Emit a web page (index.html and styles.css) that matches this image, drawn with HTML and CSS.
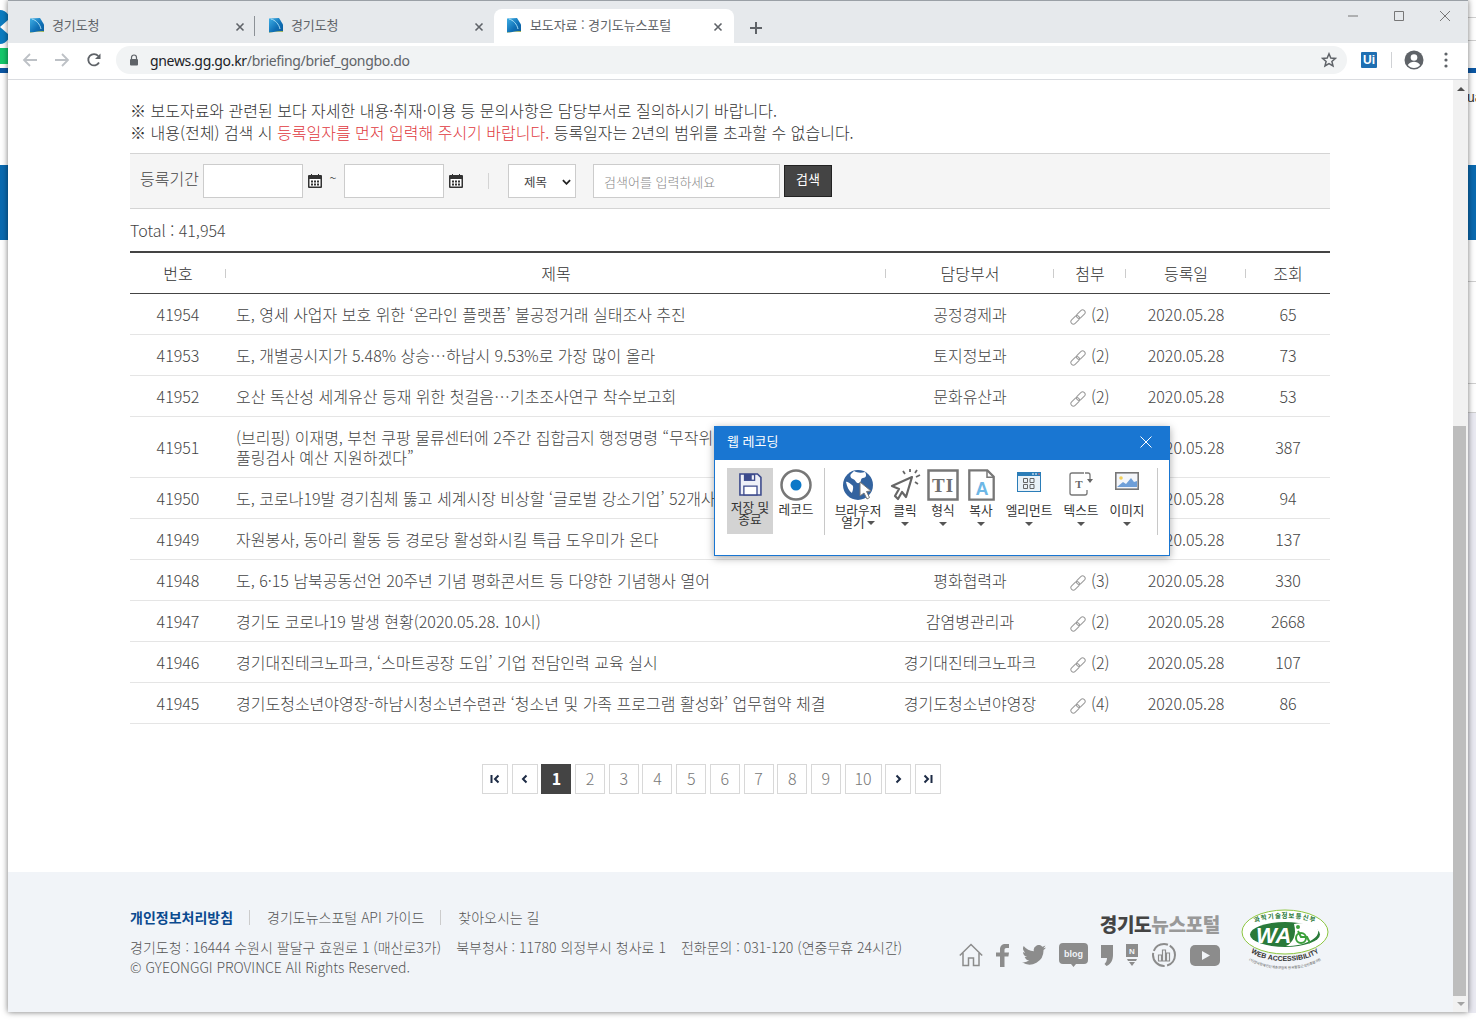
FILE: index.html
```html
<!DOCTYPE html>
<html lang="ko">
<head>
<meta charset="utf-8">
<title>보도자료 : 경기도뉴스포털</title>
<link rel="stylesheet" href="styles.css">
</head>
<body>
<svg class="defs" width="0" height="0" aria-hidden="true">
  <defs>
    <linearGradient id="favg" x1="0" y1="0" x2="1" y2="1"><stop offset="0" stop-color="#3fb0e6"/><stop offset=".6" stop-color="#0f6fb5"/><stop offset="1" stop-color="#0b5c9c"/></linearGradient>
    <symbol id="fav" viewBox="0 0 16 16"><path d="M1 1.500 11 1l4 6.500V14L1 15.500z" fill="url(#favg)"/><path d="M1 15.500 15 14v1H1z" fill="#9db34a"/><path d="M3 2c4 1 8 5 9 10" fill="none" stroke="#a5dcf5" stroke-width="1"/></symbol>
    <symbol id="x" viewBox="0 0 10 10"><path d="M1.500 1.500l7 7m0-7l-7 7" fill="none" stroke="#5f6368" stroke-width="1.600"/></symbol>
    <symbol id="cal" viewBox="0 0 14 14"><path d="M1 1h2V0h1v1h6V0h1v1h2a1 1 0 0 1 1 1v11a1 1 0 0 1-1 1H1a1 1 0 0 1-1-1V2a1 1 0 0 1 1-1z" fill="#333"/><path d="M1.500 5h11v7.500h-11z" fill="#fff"/><path d="M3 6.500h2v2H3zM6 6.500h2v2H6zM9 6.500h2v2H9zM3 9.500h2v2H3zM6 9.500h2v2H6zM9 9.500h2v2H9z" fill="#333"/></symbol>
    <symbol id="clip" viewBox="0 0 16 16"><g fill="none" stroke="#999" stroke-width="1" transform="rotate(-45 8 8)"><rect x="-1" y="5.500" width="10" height="5" rx="2.500"/><rect x="7" y="5.500" width="10" height="5" rx="2.500"/></g></symbol>
    <symbol id="caret" viewBox="0 0 8 4"><path d="M0 0h8L4 4z" fill="#555"/></symbol>
  </defs>
</svg>

<div class="desktop">
  <div class="peek peek-logo"><span class="peek-arrow"></span></div>
  <div class="peek peek-green"></div>
  <div class="peek peek-stripe-l"></div>
  <div class="peek peek-band-l"></div>
  <div class="peek peek-stripe-r"></div>
  <div class="peek peek-ua">ua</div>
  <div class="peek peek-band-r"></div>
  <div class="peek peek-line1"></div>
  <div class="peek peek-line2"></div>
  <div class="peek peek-line3"></div>
  <div class="peek peek-line4"></div>
  <div class="peek peek-line5"></div>
  <div class="peek peek-lav"></div>

  <div class="window">
    <div class="tabbar">
      <div class="tab">
        <svg class="favicon"><use href="#fav"/></svg><span class="tab-title">경기도청</span>
        <svg class="tab-x"><use href="#x"/></svg>
      </div>
      <span class="tab-sep"></span>
      <div class="tab">
        <svg class="favicon"><use href="#fav"/></svg><span class="tab-title">경기도청</span>
        <svg class="tab-x"><use href="#x"/></svg>
      </div>
      <div class="tab tab-active">
        <svg class="favicon"><use href="#fav"/></svg><span class="tab-title">보도자료 : 경기도뉴스포털</span>
        <svg class="tab-x"><use href="#x"/></svg>
      </div>
      <svg class="newtab" viewBox="0 0 12 12"><path d="M6 0v12M0 6h12" stroke="#5f6368" stroke-width="2" fill="none"/></svg>
      <div class="winctl">
        <svg viewBox="0 0 46 30"><path d="M18 15h10" stroke="#777" fill="none"/></svg>
        <svg viewBox="0 0 46 30"><path d="M18.500 10.500h9v9h-9z" stroke="#777" fill="none"/></svg>
        <svg viewBox="0 0 46 30"><path d="M18 10l10 10m0-10L18 20" stroke="#777" fill="none"/></svg>
      </div>
    </div>
    <div class="toolbar">
      <svg class="nav" viewBox="0 0 16 16"><path d="M15 8H2M8 2 2 8l6 6" fill="none" stroke="#bdc1c6" stroke-width="1.800"/></svg>
      <svg class="nav" viewBox="0 0 16 16"><path d="M1 8h13M8 2l6 6-6 6" fill="none" stroke="#bdc1c6" stroke-width="1.800"/></svg>
      <svg class="nav" viewBox="0 0 16 16"><path d="M13 10.500A5.700 5.700 0 1 1 12.300 4" fill="none" stroke="#5f6368" stroke-width="1.800"/><path d="M14.500 1.500V7H9z" fill="#5f6368"/></svg>
      <div class="omnibox">
        <svg class="lock" viewBox="0 0 10 12"><path d="M2.500 5V3.500a2.500 2.500 0 0 1 5 0V5" fill="none" stroke="#5f6368" stroke-width="1.200"/><rect x="1" y="5" width="8" height="6.500" rx="1" fill="#5f6368"/></svg>
        <span class="url">gnews.gg.go.kr<span class="url-path">/briefing/brief_gongbo.do</span></span>
        <svg class="star" viewBox="0 0 16 16"><path d="M8 1.800l1.800 4.200 4.600.4-3.500 3 1.100 4.500L8 11.500l-4 2.400 1.100-4.500-3.500-3 4.600-.4z" fill="none" stroke="#5f6368" stroke-width="1.500"/></svg>
      </div>
      <span class="ui-badge">Ui</span>
      <span class="tool-sep"></span>
      <svg class="avatar" viewBox="0 0 20 20"><circle cx="10" cy="10" r="9.500" fill="#5f6368"/><circle cx="10" cy="7.500" r="3.300" fill="#fff"/><path d="M3.800 15c1.500-2.500 4-3.200 6.200-3.200s4.700.7 6.200 3.200c-1.500 1.800-3.700 3-6.200 3s-4.700-1.200-6.200-3z" fill="#fff"/></svg>
      <svg class="dots" viewBox="0 0 4 16"><circle cx="2" cy="2" r="1.600" fill="#5f6368"/><circle cx="2" cy="8" r="1.600" fill="#5f6368"/><circle cx="2" cy="14" r="1.600" fill="#5f6368"/></svg>
    </div>

    <div class="viewport">
      <main class="page">
        <div class="content">
          <p class="notice">※ 보도자료와 관련된 보다 자세한 내용·취재·이용 등 문의사항은 담당부서로 질의하시기 바랍니다.</p>
          <p class="notice">※ 내용(전체) 검색 시 <em class="red">등록일자를 먼저 입력해 주시기 바랍니다.</em> 등록일자는 2년의 범위를 초과할 수 없습니다.</p>

          <form class="search">
            <label class="search-label">등록기간</label>
            <input class="date" type="text">
            <svg class="cal"><use href="#cal"/></svg>
            <span class="tilde">~</span>
            <input class="date" type="text">
            <svg class="cal"><use href="#cal"/></svg>
            <span class="search-sep"></span>
            <div class="select">제목<svg class="chev" viewBox="0 0 10 6"><path d="M1 1l4 4 4-4" fill="none" stroke="#222" stroke-width="2"/></svg></div>
            <div class="keyword">검색어를 입력하세요</div>
            <button class="search-btn" type="button">검색</button>
          </form>

          <p class="total">Total : 41,954</p>

          <table class="list">
            <colgroup><col class="c1"><col class="c2"><col class="c3"><col class="c4"><col class="c5"><col class="c6"></colgroup>
            <thead>
              <tr><th>번호</th><th>제목</th><th>담당부서</th><th>첨부</th><th>등록일</th><th>조회</th></tr>
            </thead>
            <tbody>
              <tr><td>41954</td><td class="t">도, 영세 사업자 보호 위한 ‘온라인 플랫폼’ 불공정거래 실태조사 추진</td><td>공정경제과</td><td><svg class="clip"><use href="#clip"/></svg> (2)</td><td>2020.05.28</td><td>65</td></tr>
              <tr><td>41953</td><td class="t">도, 개별공시지가 5.48% 상승…하남시 9.53%로 가장 많이 올라</td><td>토지정보과</td><td><svg class="clip"><use href="#clip"/></svg> (2)</td><td>2020.05.28</td><td>73</td></tr>
              <tr><td>41952</td><td class="t">오산 독산성 세계유산 등재 위한 첫걸음…기초조사연구 착수보고회</td><td>문화유산과</td><td><svg class="clip"><use href="#clip"/></svg> (2)</td><td>2020.05.28</td><td>53</td></tr>
              <tr class="tall"><td>41951</td><td class="t">(브리핑) 이재명, 부천 쿠팡 물류센터에 2주간 집합금지 행정명령 “무작위<br>풀링검사 예산 지원하겠다”</td><td>공보담당관</td><td><svg class="clip"><use href="#clip"/></svg> (2)</td><td>2020.05.28</td><td>387</td></tr>
              <tr><td>41950</td><td class="t">도, 코로나19발 경기침체 뚫고 세계시장 비상할 ‘글로벌 강소기업’ 52개사</td><td>기업육성과</td><td><svg class="clip"><use href="#clip"/></svg> (2)</td><td>2020.05.28</td><td>94</td></tr>
              <tr><td>41949</td><td class="t">자원봉사, 동아리 활동 등 경로당 활성화시킬 특급 도우미가 온다</td><td>노인복지과</td><td><svg class="clip"><use href="#clip"/></svg> (2)</td><td>2020.05.28</td><td>137</td></tr>
              <tr><td>41948</td><td class="t">도, 6·15 남북공동선언 20주년 기념 평화콘서트 등 다양한 기념행사 열어</td><td>평화협력과</td><td><svg class="clip"><use href="#clip"/></svg> (3)</td><td>2020.05.28</td><td>330</td></tr>
              <tr><td>41947</td><td class="t">경기도 코로나19 발생 현황(2020.05.28. 10시)</td><td>감염병관리과</td><td><svg class="clip"><use href="#clip"/></svg> (2)</td><td>2020.05.28</td><td>2668</td></tr>
              <tr><td>41946</td><td class="t">경기대진테크노파크, ‘스마트공장 도입’ 기업 전담인력 교육 실시</td><td>경기대진테크노파크</td><td><svg class="clip"><use href="#clip"/></svg> (2)</td><td>2020.05.28</td><td>107</td></tr>
              <tr><td>41945</td><td class="t">경기도청소년야영장-하남시청소년수련관 ‘청소년 및 가족 프로그램 활성화’ 업무협약 체결</td><td>경기도청소년야영장</td><td><svg class="clip"><use href="#clip"/></svg> (4)</td><td>2020.05.28</td><td>86</td></tr>
            </tbody>
          </table>

          <nav class="pager">
            <a class="pg pg-ctl"><svg viewBox="0 0 10 10"><path d="M1.500 1v8M8.500 1.500 5 5l3.500 3.500" fill="none" stroke="#1d2b45" stroke-width="2"/></svg></a>
            <a class="pg pg-ctl"><svg viewBox="0 0 10 10"><path d="M6.500 1.500 3 5l3.500 3.500" fill="none" stroke="#1d2b45" stroke-width="2"/></svg></a>
            <a class="pg pg-on">1</a><a class="pg">2</a><a class="pg">3</a><a class="pg">4</a><a class="pg">5</a><a class="pg">6</a><a class="pg">7</a><a class="pg">8</a><a class="pg">9</a><a class="pg pg-wide">10</a>
            <a class="pg pg-ctl"><svg viewBox="0 0 10 10"><path d="M3.500 1.500 7 5 3.500 8.500" fill="none" stroke="#1d2b45" stroke-width="2"/></svg></a>
            <a class="pg pg-ctl"><svg viewBox="0 0 10 10"><path d="M8.500 1v8M1.500 1.500 5 5 1.500 8.500" fill="none" stroke="#1d2b45" stroke-width="2"/></svg></a>
          </nav>
        </div>

        <footer class="footer">
          <div class="footer-in">
            <div class="foot-left">
              <div class="foot-links"><a class="strong">개인정보처리방침</a><i></i><a>경기도뉴스포털 API 가이드</a><i></i><a>찾아오시는 길</a></div>
              <p class="foot-addr"><span>경기도청 : 16444 수원시 팔달구 효원로 1 (매산로3가)</span><span>북부청사 : 11780 의정부시 청사로 1</span><span>전화문의 : 031-120 (연중무휴 24시간)</span></p>
              <p class="foot-copy">© GYEONGGI PROVINCE All Rights Reserved.</p>
            </div>
            <div class="foot-right">
              <div class="brand"><b>경기도</b><b class="brand-g">뉴스포털</b></div>
              <div class="socials">
                <svg class="so so-home" viewBox="0 0 24 24"><path d="M.8 12.500 12 1.500l11.200 11M4 10v12.500h5.500V15h5v7.500H20V10" fill="none" stroke="#8c8c8c" stroke-width="1.500"/></svg>
                <svg class="so so-f" viewBox="0 0 13 23"><path d="M4 23V12.500H0V8.500h4V5.500C4 2 6 0 9.500 0H13v4h-2.500C9 4 8.500 4.700 8.500 6v2.500H13l-.6 4H8.500V23z" fill="#8c8c8c"/></svg>
                <svg class="so so-tw" viewBox="0 0 24 20"><path d="M24 2.400c-.9.400-1.800.7-2.800.8 1-.6 1.800-1.600 2.200-2.700-1 .6-2 1-3.100 1.200A4.900 4.900 0 0 0 11.900 6.200 14 14 0 0 1 1.700.900a4.900 4.900 0 0 0 1.500 6.600c-.8 0-1.600-.2-2.200-.6 0 2.400 1.700 4.400 3.900 4.900-.7.200-1.500.2-2.200.1.600 2 2.400 3.400 4.600 3.400A9.900 9.900 0 0 1 0 17.300 14 14 0 0 0 21.500 5c1-.7 1.800-1.600 2.500-2.600z" fill="#8c8c8c"/></svg>
                <svg class="so so-blog" viewBox="0 0 29 24"><path d="M4 0h21a4 4 0 0 1 4 4v13a4 4 0 0 1-4 4h-8l-2.500 3-2.500-3H4a4 4 0 0 1-4-4V4a4 4 0 0 1 4-4z" fill="#8c8c8c"/><text x="14.500" y="14" text-anchor="middle" class="blogtx">blog</text></svg>
                <svg class="so so-comma" viewBox="0 0 12 21"><path d="M0 0h12v10c0 5-2 9-6.500 11L3.500 19C5 17.500 6 15.500 6 13H0z" fill="#8c8c8c"/></svg>
                <svg class="so so-n" viewBox="0 0 12 22"><path d="M0 0h12v13H0zM1 15h10l-1 2H2zM3 18h6l-3 4z" fill="#8c8c8c"/><text x="6" y="9.500" text-anchor="middle" class="ntx">N</text></svg>
                <svg class="so so-chart" viewBox="0 0 24 24"><circle cx="12" cy="12" r="11" fill="none" stroke="#8c8c8c" stroke-width="2" stroke-dasharray="14 2.500 20 2 17 2"/><path d="M6.500 12h3v6h-3zM10.500 7h3v11h-3zM14.500 10h3v8h-3z" fill="none" stroke="#8c8c8c" stroke-width="1.200"/></svg>
                <svg class="so so-yt" viewBox="0 0 30 21"><rect width="30" height="21" rx="5" fill="#8c8c8c"/><path d="M12 6v9l8-4.500z" fill="#f1f4f8"/></svg>
              </div>
            </div>
            <svg class="wa" viewBox="0 0 90 64">
              <defs>
                <path id="waTop" d="M10 20A35 10 0 0 1 80 20"/>
                <path id="waBot" d="M6 36A39 17 0 0 0 84 36"/>
                <path id="waBot2" d="M1 40A44 21 0 0 0 89 40"/>
              </defs>
              <ellipse cx="45" cy="24" rx="43" ry="22" fill="#fff" stroke="#8cc63f" stroke-width="1"/>
              <ellipse cx="45" cy="26.500" rx="35" ry="12.500" fill="#2a7a3a"/>
              <path d="M46 38c7-3 11-11 8-22 9-2 20 1 24 6 2 8-12 16-32 16z" fill="#fff"/>
              <text x="16" y="35" class="wa-big">WA</text>
              <g fill="none" stroke="#3aa03a" stroke-width="2"><circle cx="61" cy="30" r="5"/><path d="M58 23l3 6h6l3 6"/></g>
              <circle cx="58" cy="19" r="2" fill="#3aa03a"/>
              <text class="wa-top"><textPath href="#waTop" startOffset="50%" text-anchor="middle">과학기술정보통신부</textPath></text>
              <text class="wa-bot"><textPath href="#waBot" startOffset="50%" text-anchor="middle">WEB ACCESSIBILITY</textPath></text>
              <text class="wa-small"><textPath href="#waBot2" startOffset="50%" text-anchor="middle">(사)한국장애인단체총연합회 한국웹접근성인증평가원</textPath></text>
            </svg>
          </div>
        </footer>
      </main>
      <div class="scrollbar">
        <span class="sb-up"></span>
        <span class="sb-thumb"></span>
        <span class="sb-down"></span>
      </div>
    </div>

    <section class="dialog">
      <header class="dlg-head"><span>웹 레코딩</span><svg class="dlg-x" viewBox="0 0 12 12"><path d="M.5.5l11 11m0-11l-11 11" stroke="#fff" fill="none"/></svg></header>
      <div class="dlg-body">
        <div class="it it-save">
          <svg class="ic" viewBox="0 0 32 32"><path d="M4.500 4.500h20l4 4v20h-24z" fill="#eef0f8" stroke="#3c4a8c" stroke-width="1.800"/><path d="M9 4.500h13v8H9z" fill="#3c4a8c"/><path d="M18 6h2.500v5H18z" fill="#eef0f8"/><path d="M9 18.500h15v10H9z" fill="#fff" stroke="#3c4a8c" stroke-width="1.500"/></svg>
          <span class="lb">저장 및<br>종료</span>
        </div>
        <div class="it it-rec">
          <svg class="ic" viewBox="0 0 32 32"><circle cx="16" cy="16" r="14.500" fill="#fff" stroke="#777" stroke-width="2.500"/><circle cx="16" cy="16" r="5.500" fill="#0b78c8"/></svg>
          <span class="lb">레코드</span>
        </div>
        <span class="dlg-sep"></span>
        <div class="it it-brow">
          <svg class="ic" viewBox="0 0 32 32"><circle cx="16" cy="16" r="15" fill="#33639f"/><path d="M12 2c3 2 8 2 11 1 2 3 1 6-2 6s-1 4-4 5-3-3-6-4-3-4-2-5zM4 13c2-1 4 2 6 3s1 5 0 8c-3-2-5-6-6-11z" fill="#fff"/><path d="M18 13l11 9-4.500.5 3 6-2.500 1.500-3-6-4 3z" fill="#fff" stroke="#777"/></svg>
          <span class="lb">브라우저<br>열기<svg class="caret-in"><use href="#caret"/></svg></span>
        </div>
        <div class="it it-click">
          <svg class="ic" viewBox="0 0 32 32"><path d="M23 8 3 17l7 3-4 7 3 3 4-7 4 5z" fill="#fff" stroke="#666" stroke-width="2.200" stroke-linejoin="round"/><path d="M27 8l4-2M26 4l2-3M21 3V0M16 5l-2-3M26 13l3 2" stroke="#666" stroke-width="1.800"/></svg>
          <span class="lb">클릭</span><svg class="caret"><use href="#caret"/></svg>
        </div>
        <div class="it it-fmt">
          <svg class="ic" viewBox="0 0 32 32"><rect x="1.500" y="1.500" width="29" height="29" fill="#fff" stroke="#777" stroke-width="2.500"/><text x="16" y="23" text-anchor="middle" class="ti">TI</text></svg>
          <span class="lb">형식</span><svg class="caret"><use href="#caret"/></svg>
        </div>
        <div class="it it-copy">
          <svg class="ic" viewBox="0 0 27 32"><path d="M1.300 1.300h18l6.400 6.400v23h-24.400z" fill="#fff" stroke="#777" stroke-width="2.300"/><path d="M19 1.300v7h6.700" fill="none" stroke="#777" stroke-width="1.500"/><text x="14" y="26" text-anchor="middle" class="doc-a">A</text></svg>
          <span class="lb">복사</span><svg class="caret"><use href="#caret"/></svg>
        </div>
        <div class="it it-el">
          <svg class="ic" viewBox="0 0 24 20"><rect width="24" height="20" fill="#2b7db8"/><rect x="1" y="4" width="22" height="15" fill="#eaf2f8"/><path d="M6.500 6.500h4v4h-4zM13 6.500h4v4h-4zM6.500 12.500h4v4h-4zM13 12.500h4v4h-4z" fill="none" stroke="#666"/><path d="M15 1.500h2v1h-2zM18 1.500h2v1h-2z" fill="#fff"/><path d="M21 1.500h2v1h-2z" fill="#e66"/></svg>
          <span class="lb">엘리먼트</span><svg class="caret"><use href="#caret"/></svg>
        </div>
        <div class="it it-text">
          <svg class="ic" viewBox="0 0 24 24"><path d="M15 1H3a2 2 0 0 0-2 2v18a2 2 0 0 0 2 2h13a2 2 0 0 0 2-2v-3" fill="none" stroke="#777" stroke-width="1.300"/><path d="M16 1h3a2 2 0 0 1 2 2v4" fill="none" stroke="#777" stroke-width="1.300"/><path d="M18 7h6l-3 4z" fill="#666"/><text x="10" y="16" text-anchor="middle" class="tt">T</text></svg>
          <span class="lb">텍스트</span><svg class="caret"><use href="#caret"/></svg>
        </div>
        <div class="it it-img">
          <svg class="ic" viewBox="0 0 24 18"><rect x=".8" y=".8" width="22.400" height="16.400" fill="#f4f6fa" stroke="#777" stroke-width="1.600"/><path d="M2 15l6-5 3 2 5-6 3 4 3-1v6H2z" fill="#6f9fd8"/><circle cx="6" cy="6" r="1.800" fill="#f2d05a"/></svg>
          <span class="lb">이미지</span><svg class="caret"><use href="#caret"/></svg>
        </div>
        <span class="dlg-sep dlg-sep2"></span>
      </div>
    </section>
  </div>
</div>
</body>
</html>
```
FILE: styles.css
```css
* { box-sizing: border-box; }
html, body { margin: 0; padding: 0; height: 100%; overflow: hidden; background: #fff; }
body { font-family: "Noto Sans CJK KR", "Noto Sans", sans-serif; font-weight: 300; color: #333; }
p { margin: 0; }
em { font-style: normal; }
.defs { position: absolute; }

.desktop { position: relative; width: 1476px; height: 1020px; background: #fff; overflow: hidden; }
.peek { position: absolute; }
.peek-logo { left: -12px; top: 10px; width: 24px; height: 34px; border-radius: 50%; background: #0c7cc0; }
.peek-arrow { position: absolute; left: 12px; top: 10px; border: 7px solid transparent; border-right: 8px solid #fff; border-left: 0; }
.peek-green { left: 0; top: 48px; width: 8px; height: 16px; background: #14c86a; }
.peek-stripe-l { left: 0; top: 68px; width: 8px; height: 5px; background: #0c57a4; }
.peek-band-l { left: 0; top: 165px; width: 8px; height: 75px; background: #0a6ab0; }
.peek-stripe-r { left: 1468px; top: 68px; width: 8px; height: 5px; background: #0c57a4; }
.peek-ua { left: 1468px; top: 88px; font: 400 14px/18px "Liberation Sans", sans-serif; color: #333; text-indent: -1px; }
.peek-band-r { left: 1468px; top: 165px; width: 8px; height: 75px; background: #0a6ab0; }
.peek-line1, .peek-line2, .peek-line3, .peek-line4, .peek-line5 { left: 1468px; width: 8px; height: 1px; background: #cfcfcf; }
.peek-line1 { top: 17px; }
.peek-line2 { top: 40px; }
.peek-line3 { top: 281px; }
.peek-line4 { top: 383px; }
.peek-line5 { top: 412px; }
.peek-lav { left: 1468px; top: 413px; width: 8px; height: 600px; background: #eaeaf2; }

.window { position: absolute; left: 8px; top: 0; width: 1460px; height: 1012px; background: #fff; box-shadow: 0 0 6px rgba(0,0,0,.55); display: flex; flex-direction: column; font-family: "Noto Sans CJK KR", "Noto Sans", sans-serif; }

.tabbar { height: 43px; flex: none; background: #e6e9ec; border-top: 1px solid #9aa0a6; display: flex; align-items: flex-end; padding-left: 8px; position: relative; }
.tab { width: 239px; height: 34px; display: flex; align-items: center; padding-left: 13px; padding-bottom: 3px; position: relative; }
.tab-sep { width: 0; height: 20px; border-left: 1px solid #8c9196; margin: 0 0 7px -1px; position: relative; left: 0; }
.tab-active { width: 240px; background: #fff; border-radius: 8px 8px 0 0; padding-left: 12px; }
.favicon { width: 16px; height: 16px; flex: none; }
.tab-title { margin-left: 7px; font-size: 13px; font-weight: 400; color: #5f6368; letter-spacing: -.1px; white-space: nowrap; }
.tab-active .tab-title { margin-left: 8px; }
.tab-x { width: 10px; height: 10px; position: absolute; right: 10px; top: 13px; }
.tab-active .tab-x { right: 11px; }
.newtab { width: 12px; height: 12px; margin: 0 0 9px 16px; flex: none; }
.winctl { position: absolute; right: 0; top: 0; display: flex; }
.winctl svg { width: 46px; height: 30px; }

.toolbar { height: 37px; flex: none; background: #fff; border-bottom: 1px solid #dadce0; display: flex; align-items: center; padding: 0 0 2px 14px; }
.nav { width: 16px; height: 16px; flex: none; margin-right: 16px; }
.omnibox { width: 1231px; height: 28px; margin-left: -2px; border-radius: 14px; background: #f1f3f4; display: flex; align-items: center; padding: 0 10px 0 13px; flex: none; }
.lock { width: 10px; height: 12px; flex: none; }
.url { margin-left: 11px; font: 400 14px "Noto Sans", sans-serif; color: #202124; flex: 1; letter-spacing: -.33px; }
.url-path { color: #5f6368; }
.star { width: 16px; height: 16px; flex: none; }
.ui-badge { width: 16px; height: 16px; margin-left: 14px; background: #1f6fb2; color: #fff; font: 700 12px/16px "Liberation Sans", sans-serif; text-align: center; border-radius: 1px; flex: none; }
.tool-sep { width: 1px; height: 16px; background: #d0d2d5; margin-left: 14px; flex: none; }
.avatar { width: 20px; height: 20px; margin-left: 12px; flex: none; }
.dots { width: 4px; height: 16px; margin-left: 20px; flex: none; }

.viewport { flex: 1; display: flex; min-height: 0; }
.page { flex: 1; min-width: 0; display: flex; flex-direction: column; overflow: hidden; }
.content { width: 1200px; margin-left: 122px; padding-top: 19px; }
.notice { font-size: 16px; line-height: 22px; color: #333; white-space: nowrap; }
.red { color: #e0383e; }

.search { height: 56px; margin-top: 10px; background: #f5f5f5; border-top: 1px solid #d4d4d4; border-bottom: 1px solid #d4d4d4; display: flex; align-items: center; padding-left: 10px; }
.search-label { font-size: 16px; color: #444; width: 63px; flex: none; margin-top: -6px; }
.date { width: 100px; height: 34px; background: #fff; border: 1px solid #ccc; border-radius: 0; padding: 0; flex: none; }
.cal { width: 14px; height: 14px; margin-left: 5px; flex: none; }
.tilde { width: 22px; flex: none; text-align: center; font-size: 13px; color: #444; margin-top: -8px; }
.search-sep { width: 1px; height: 16px; background: #d4d4d4; margin-left: 25px; flex: none; }
.select { width: 68px; height: 34px; margin-left: 19px; background: #fff; border: 1px solid #ccc; font-size: 12.500px; font-weight: 400; color: #444; display: flex; align-items: center; padding-left: 15px; position: relative; flex: none; }
.chev { width: 9px; height: 6px; position: absolute; right: 4px; top: 14px; }
.keyword { width: 187px; height: 34px; margin-left: 17px; background: #fff; border: 1px solid #ccc; font-size: 13px; color: #888; display: flex; align-items: center; padding-left: 10px; flex: none; }
.search-btn { width: 48px; height: 32px; margin-left: 4px; background: #444; border: 1px solid #222; color: #fff; font: 400 13px "Noto Sans CJK KR", sans-serif; padding: 0 0 5px; flex: none; }

.total { margin-top: 11px; font-size: 16px; line-height: 20px; color: #444; }

.list { width: 1200px; margin-top: 11px; border-collapse: separate; border-spacing: 0; table-layout: fixed; border-top: 2px solid #444; }
.c1 { width: 96px; } .c2 { width: 660px; } .c3 { width: 168px; } .c4 { width: 72px; } .c5 { width: 120px; } .c6 { width: 84px; }
.list th { height: 41px; font-size: 16px; font-weight: 300; color: #333; border-bottom: 1px solid #444; padding: 0; position: relative; }
.list th + th::before { content: ""; position: absolute; left: -1px; top: 16px; height: 9px; border-left: 1px solid #ccc; }
.list td { height: 41px; font-size: 16px; color: #444; text-align: center; border-bottom: 1px solid #e5e5e5; padding: 0; line-height: 20px; white-space: nowrap; overflow: hidden; }
.list tr.tall td { height: 61px; }
.list td.t { text-align: left; padding-left: 10px; }
.clip { width: 16px; height: 16px; vertical-align: -4px; }

.pager { display: flex; justify-content: center; gap: 3.680px; margin-top: 40px; height: 30px; padding-right: 37px; }
.pg { width: 30px; height: 30px; border: 1px solid #d8d8d8; display: flex; align-items: center; justify-content: center; font: 300 16px "Noto Sans CJK KR", sans-serif; color: #777; padding-bottom: 2px; }
.pg svg { width: 10px; height: 10px; }
.pg-ctl { width: 26px; padding-bottom: 0; }
.pg-on { background: #444; border-color: #444; color: #fff; font-weight: 700; }
.pg-wide { width: 37px; }

.footer { flex: 1; margin-top: 78px; background: #f1f4f8; }
.footer-in { width: 1200px; margin-left: 122px; padding-top: 36px; display: flex; position: relative; }
.foot-left { width: 830px; }
.foot-links { display: flex; align-items: center; font-size: 14px; line-height: 18px; height: 18px; color: #555; }
.foot-links .strong { font-weight: 700; color: #0b4a8f; }
.foot-links i { width: 1px; height: 15px; background: #ccc; margin: 0 17px 0 16px; }
.foot-addr { margin-top: 11px; font-size: 14px; line-height: 20px; color: #555; white-space: nowrap; }
.foot-addr span { margin-right: 15px; }
.foot-copy { font-size: 14px; line-height: 20px; color: #555; }
.foot-right { width: 270px; display: flex; flex-direction: column; align-items: flex-end; padding-right: 10px; }
.brand { font-size: 19px; line-height: 24px; margin-top: 4px; letter-spacing: -.3px; color: #444; white-space: nowrap; }
.brand b { font-weight: 900; }
.brand-g { color: #999; }
.socials { display: flex; align-items: center; margin-top: 7px; width: 261px; height: 24px; }
.so { flex: none; }
.so-home { width: 24px; height: 24px; }
.so-f { width: 13px; height: 23px; margin-left: 13px; }
.so-tw { width: 24px; height: 20px; margin-left: 13px; }
.so-blog { width: 29px; height: 24px; margin-left: 13px; }
.so-comma { width: 12px; height: 21px; margin-left: 13px; }
.so-n { width: 12px; height: 22px; margin-left: 13px; }
.so-chart { width: 24px; height: 24px; margin-left: 14px; }
.so-yt { width: 30px; height: 21px; margin-left: 14px; }
.blogtx { font: 700 9px "Liberation Sans", sans-serif; fill: #f1f4f8; }
.ntx { font: 700 8px "Liberation Sans", sans-serif; fill: #f1f4f8; }
.wa { position: absolute; right: 0; top: 36px; width: 90px; height: 64px; }
.wa-big { font: italic 700 22px "Liberation Sans", sans-serif; fill: #fff; }
.wa-top { font: 700 6.500px "Noto Sans CJK KR", sans-serif; fill: #2a7a3a; letter-spacing: .8px; }
.wa-bot { font: 700 7px "Liberation Sans", sans-serif; fill: #333; }
.wa-small { font: 400 3.400px "Noto Sans CJK KR", sans-serif; fill: #555; }

.scrollbar { width: 15px; flex: none; background: #f1f1f1; position: relative; }
.sb-up { position: absolute; left: 4px; top: 7px; border: 4px solid transparent; border-bottom: 4px solid #505050; border-top: 0; }
.sb-down { position: absolute; left: 4px; bottom: 6px; border: 4px solid transparent; border-top: 4px solid #a3a3a3; border-bottom: 0; }
.sb-thumb { position: absolute; left: 0; width: 13px; top: 346px; height: 570px; background: #bdbdbd; }

.dialog { position: absolute; left: 706px; top: 426px; width: 456px; height: 130px; background: #fff; border: 1px solid #1976d2; box-shadow: 0 2px 8px rgba(0,0,0,.35); }
.dlg-head { height: 33px; background: #1976d2; color: #fff; font-size: 13px; font-weight: 400; display: flex; align-items: center; padding: 0 0 6px 12px; position: relative; }
.dlg-x { width: 12px; height: 12px; position: absolute; right: 17px; top: 9px; }
.dlg-body { display: flex; padding: 8px 0 0 12px; font-weight: 400; }
.it { display: flex; flex-direction: column; align-items: center; flex: none; height: 66px; position: relative; font-size: 12.700px; line-height: 12px; color: #333; }
.ic { flex: none; display: block; }
.lb { text-align: center; white-space: nowrap; }
.caret, .caret-in { width: 8px; height: 4px; }
.caret { margin-top: 6px; }
.caret-in { margin-left: 2px; vertical-align: 2px; }
.it-save { width: 46px; background: #d3d3d3; }
.it-save .ic { width: 28px; height: 28px; margin: 2px 0 3px; }
.it-rec { width: 46px; }
.it-rec .ic { width: 32px; height: 32px; margin: 1px 0 2px; }
.dlg-sep { width: 1px; height: 67px; background: #c8c8c8; margin: 0 5px; flex: none; }
.it-brow { width: 56px; }
.it-brow .ic { width: 32px; height: 32px; margin: 1px 0 3px; }
.it-click { width: 38px; }
.it-click .ic { width: 32px; height: 32px; margin: 1px 0 3px; }
.it-fmt { width: 38px; }
.it-fmt .ic { width: 32px; height: 32px; margin: 1px 0 3px; }
.it-copy { width: 38px; }
.it-copy .ic { width: 27px; height: 32px; margin: 1px 0 3px; }
.it-el { width: 58px; }
.it-el .ic { width: 24px; height: 20px; margin: 4px 0 12px; }
.it-text { width: 46px; }
.it-text .ic { width: 24px; height: 24px; margin: 4px 0 8px; }
.it-img { width: 46px; }
.it-img .ic { width: 24px; height: 18px; margin: 4px 0 14px; }
.dlg-sep2 { margin-left: 7px; }
.ti { font: 700 19px "Liberation Serif", serif; fill: #6f6f6f; letter-spacing: 1px; }
.doc-a { font: 700 18px "Liberation Sans", sans-serif; fill: #6db7e6; }
.tt { font: 700 11px "Liberation Serif", serif; fill: #666; }
```
